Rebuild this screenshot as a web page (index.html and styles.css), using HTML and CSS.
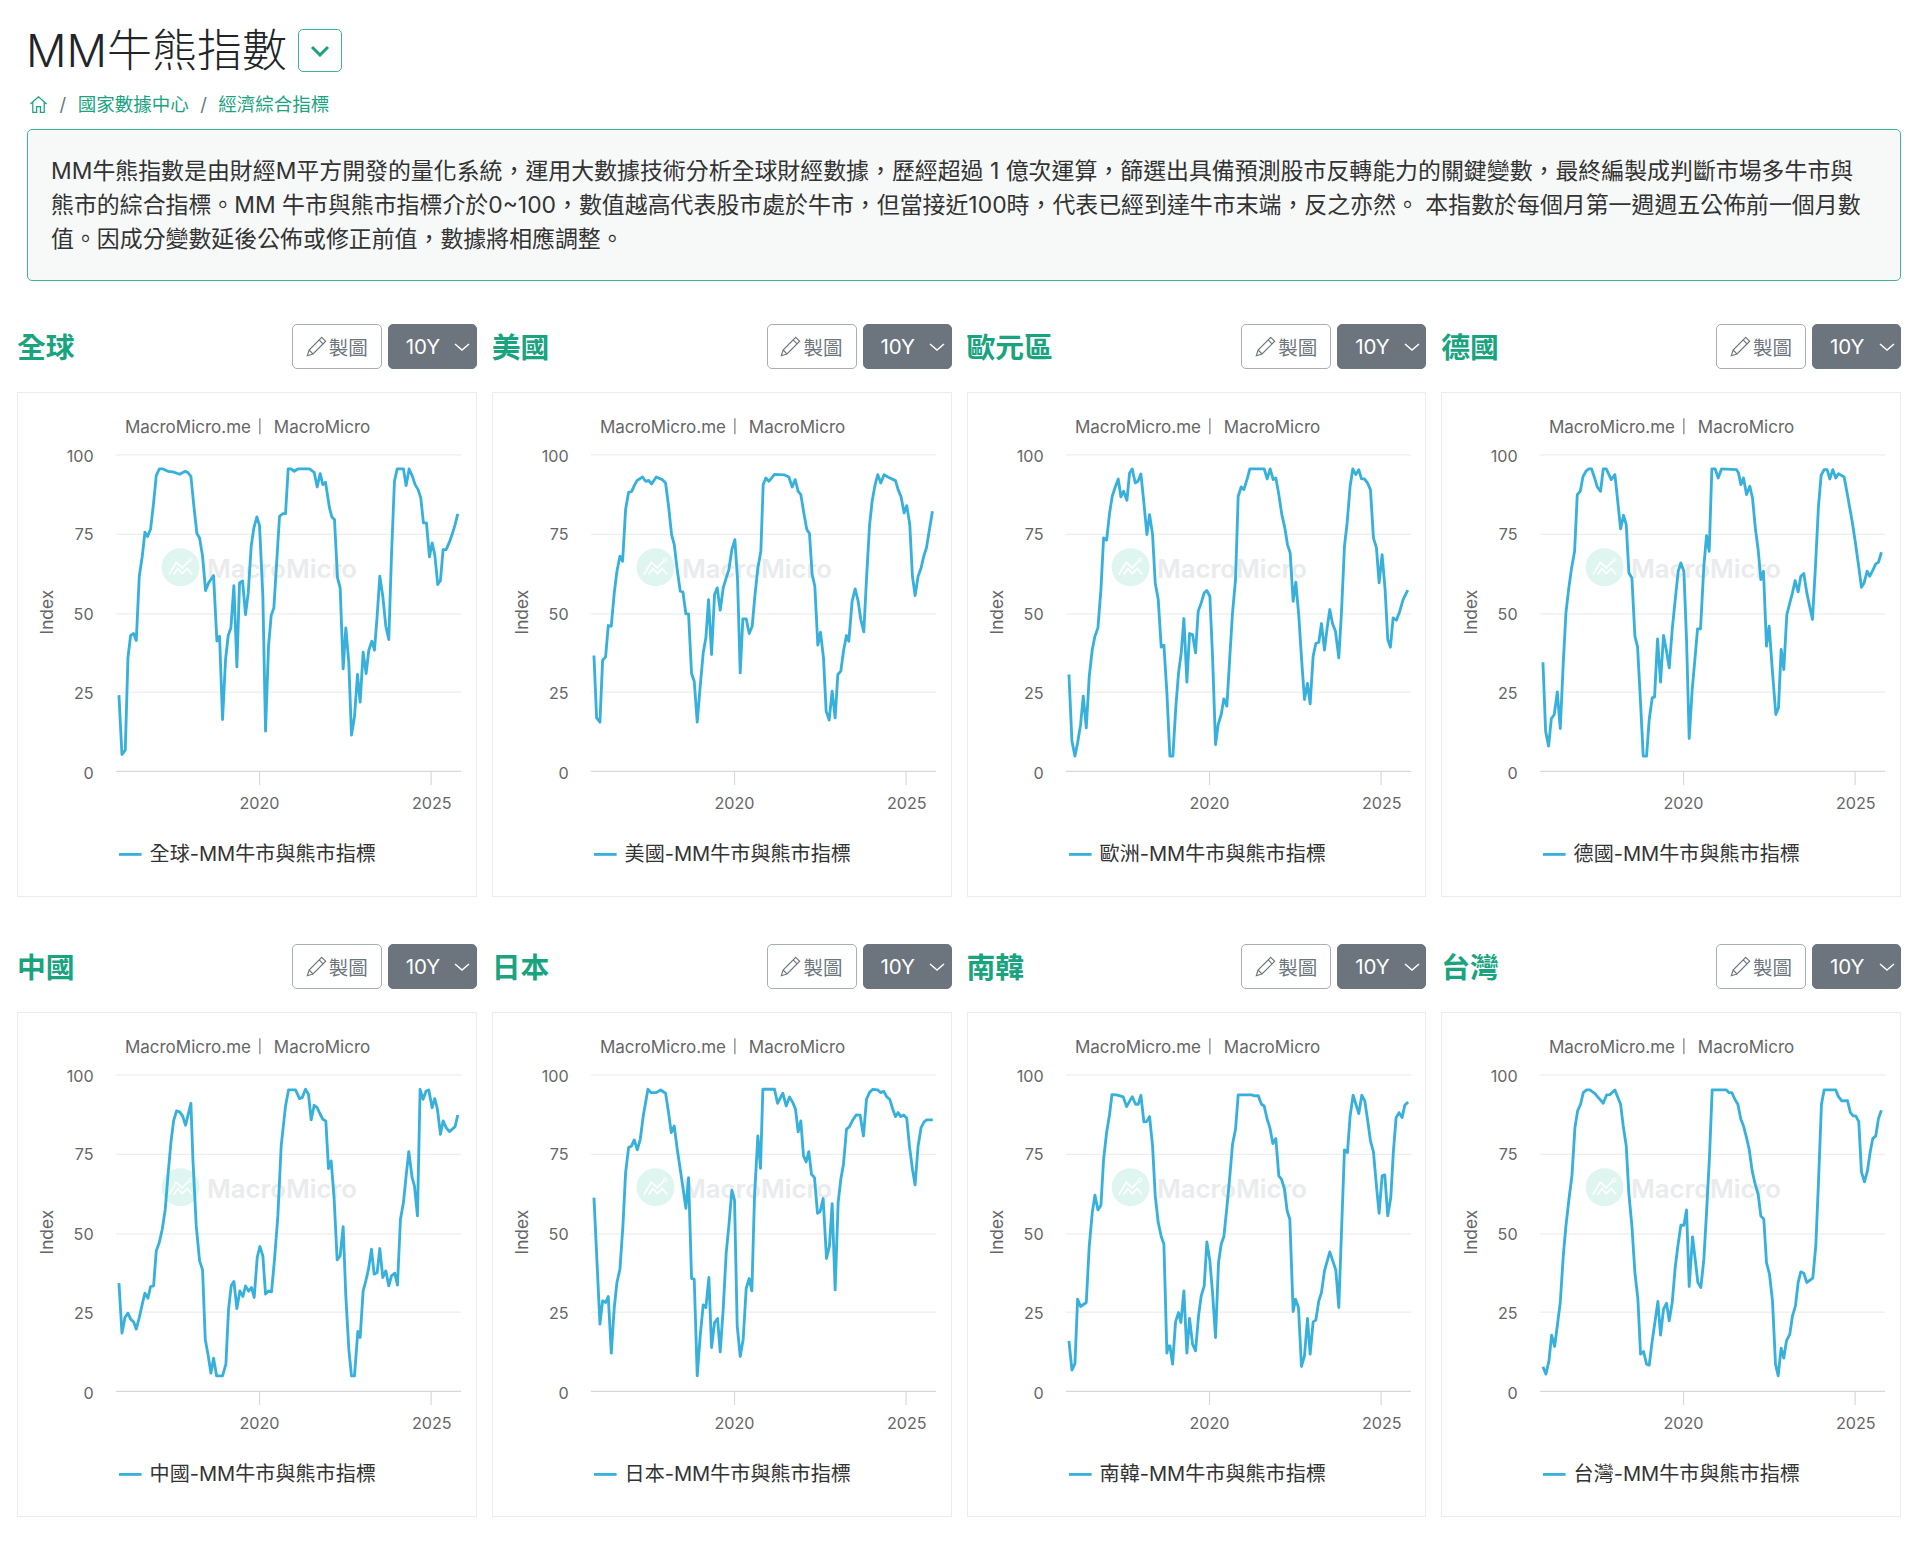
FILE: index.html
```html
<!DOCTYPE html>
<html lang="zh-TW">
<head>
<meta charset="utf-8">
<title>MM牛熊指數</title>
<link rel="stylesheet" href="styles.css">
</head>
<body>
<header class="top">
  <div class="title-row">
    <h1 class="title">MM牛熊指數</h1>
    <button class="title-toggle" type="button" aria-label="展開">
      <svg class="title-chevron" viewBox="0 0 20 12"><path d="M2 2l8 8 8-8"/></svg>
    </button>
  </div>
  <nav class="crumbs">
    <svg class="crumb-home" viewBox="0 0 20 20"><path d="M1.5 9.5L10 1.8l8.500 7.700M4 7.500V18.200h4V12.200h4v6h4V7.500"/></svg>
    <span class="crumb-sep">/</span>
    <a class="crumb">國家數據中心</a>
    <span class="crumb-sep">/</span>
    <a class="crumb">經濟綜合指標</a>
  </nav>
  <div class="intro">MM牛熊指數是由財經M平方開發的量化系統，運用大數據技術分析全球財經數據，歷經超過 1 億次運算，篩選出具備預測股市反轉能力的關鍵變數，最終編製成判斷市場多牛市與<br>熊市的綜合指標。MM 牛市與熊市指標介於0~100，數值越高代表股市處於牛市，但當接近100時，代表已經到達牛市末端，反之亦然。 本指數於每個月第一週週五公佈前一個月數<br>值。因成分變數延後公佈或修正前值，數據將相應調整。</div>
</header>
<main class="grid">

<section class="panel">
  <div class="panel-head"><h2 class="panel-title">全球</h2><div class="tools"><button class="btn-draw" type="button"><svg class="pencil" viewBox="0 0 24 24"><path d="M18 1.500l4.500 4.500L8 20.500 1.500 22.500 3.500 16zM15 4.500l4.500 4.500M3.500 16l4.500 4.500"/></svg>製圖</button><button class="btn-range" type="button">10Y<svg class="range-chevron" viewBox="0 0 16 8"><path d="M1 1l7 6 7-6"/></svg></button></div></div>
  <div class="card"><svg class="chart" viewBox="55 40 1374 1509">
    <circle class="wm-disc" cx="543" cy="563" r="57"/><path class="wm-mark" d="M508 585l22-37 18 17 19-20M522 585l13-18 13 15 15-15 15 18"/><circle class="wm-dot" cx="572" cy="541" r="5"/><text class="wm-text" x="622" y="596">MacroMicro</text>
    <path class="grid-line" d="M349 226H1385M349 464H1385M349 703H1385M349 938H1385"/><path class="axis-line" d="M349 1176H1385M780 1176V1217M1295 1176V1217"/>
    <text class="credit" x="376" y="159">MacroMicro.me</text><path class="credit-sep" d="M781 116V164"/><text class="credit" x="823" y="159">MacroMicro</text>
    <text class="tick end" x="282" y="248">100</text><text class="tick end" x="282" y="482">75</text><text class="tick end" x="282" y="721">50</text><text class="tick end" x="282" y="958">25</text><text class="tick end" x="282" y="1198">0</text>
    <text class="tick mid" x="780" y="1288">2020</text><text class="tick mid" x="1297" y="1288">2025</text>
    <text class="axis-name mid" transform="translate(159 698) rotate(-90)">Index</text>
    <polyline class="series" points="358,947 367,1125 377,1112 385,835 393,768 402,762 410,783 419,590 428,530 436,458 444,471 453,448 462,370 470,288 479,268 490,268 505,275 520,277 540,284 557,275 565,279 574,290 583,380 592,462 600,475 609,530 618,633 627,610 642,588 652,785 660,770 669,1020 678,840 686,768 694,745 703,618 712,862 720,610 729,604 738,705 746,640 755,500 763,445 772,412 780,438 790,650 798,1055 807,800 815,708 823,685 840,410 850,402 858,402 866,268 875,268 884,275 895,268 930,268 944,278 953,322 962,282 970,315 978,308 990,385 997,412 1005,420 1014,595 1022,625 1031,868 1039,745 1048,850 1056,1067 1065,1012 1074,885 1082,968 1091,818 1100,882 1108,812 1117,785 1125,812 1133,710 1141,590 1150,650 1159,740 1168,780 1176,530 1185,305 1193,268 1212,268 1220,318 1229,268 1238,288 1247,315 1256,330 1264,355 1272,430 1281,430 1290,532 1298,490 1306,525 1315,615 1323,603 1331,510 1340,510 1349,490 1358,465 1367,435 1375,403"/>
    <path class="series" d="M358 1425H426"/><text class="legend" x="450" y="1446">全球-MM牛市與熊市指標</text>
  </svg></div>
</section>

<section class="panel">
  <div class="panel-head"><h2 class="panel-title">美國</h2><div class="tools"><button class="btn-draw" type="button"><svg class="pencil" viewBox="0 0 24 24"><path d="M18 1.500l4.500 4.500L8 20.500 1.500 22.500 3.500 16zM15 4.500l4.500 4.500M3.500 16l4.500 4.500"/></svg>製圖</button><button class="btn-range" type="button">10Y<svg class="range-chevron" viewBox="0 0 16 8"><path d="M1 1l7 6 7-6"/></svg></button></div></div>
  <div class="card"><svg class="chart" viewBox="55 40 1374 1509">
    <circle class="wm-disc" cx="543" cy="563" r="57"/><path class="wm-mark" d="M508 585l22-37 18 17 19-20M522 585l13-18 13 15 15-15 15 18"/><circle class="wm-dot" cx="572" cy="541" r="5"/><text class="wm-text" x="622" y="596">MacroMicro</text>
    <path class="grid-line" d="M349 226H1385M349 464H1385M349 703H1385M349 938H1385"/><path class="axis-line" d="M349 1176H1385M780 1176V1217M1295 1176V1217"/>
    <text class="credit" x="376" y="159">MacroMicro.me</text><path class="credit-sep" d="M781 116V164"/><text class="credit" x="823" y="159">MacroMicro</text>
    <text class="tick end" x="282" y="248">100</text><text class="tick end" x="282" y="482">75</text><text class="tick end" x="282" y="721">50</text><text class="tick end" x="282" y="958">25</text><text class="tick end" x="282" y="1198">0</text>
    <text class="tick mid" x="780" y="1288">2020</text><text class="tick mid" x="1297" y="1288">2025</text>
    <text class="axis-name mid" transform="translate(159 698) rotate(-90)">Index</text>
    <polyline class="series" transform="translate(15 0)" points="343,828 351,1015 361,1028 369,842 378,832 386,738 395,740 404,640 412,575 421,530 429,545 438,390 447,338 456,336 464,318 472,303 489,292 498,305 507,302 516,313 530,292 548,300 558,310 567,380 576,465 584,495 593,570 602,635 610,637 619,703 627,703 636,882 644,905 653,1028 662,920 671,820 679,775 687,660 696,825 705,645 713,625 722,692 731,625 740,595 748,570 757,510 766,480 774,600 782,880 790,718 800,718 809,762 818,740 826,650 835,565 844,515 851,315 859,295 868,305 885,284 915,286 928,292 938,322 947,300 956,335 964,345 973,400 982,450 990,462 998,585 1006,620 1015,797 1023,758 1032,835 1040,995 1049,1022 1058,935 1067,1015 1075,885 1084,875 1092,815 1101,768 1108,785 1118,665 1127,628 1136,665 1144,720 1153,757 1161,600 1170,440 1178,365 1187,315 1195,285 1204,310 1214,285 1225,292 1248,303 1256,330 1265,352 1274,400 1282,378 1291,435 1299,590 1307,648 1316,590 1325,565 1333,530 1341,505 1350,450 1359,395"/>
    <path class="series" d="M358 1425H426"/><text class="legend" x="450" y="1446">美國-MM牛市與熊市指標</text>
  </svg></div>
</section>

<section class="panel">
  <div class="panel-head"><h2 class="panel-title">歐元區</h2><div class="tools"><button class="btn-draw" type="button"><svg class="pencil" viewBox="0 0 24 24"><path d="M18 1.500l4.500 4.500L8 20.500 1.500 22.500 3.500 16zM15 4.500l4.500 4.500M3.500 16l4.500 4.500"/></svg>製圖</button><button class="btn-range" type="button">10Y<svg class="range-chevron" viewBox="0 0 16 8"><path d="M1 1l7 6 7-6"/></svg></button></div></div>
  <div class="card"><svg class="chart" viewBox="55 40 1374 1509">
    <circle class="wm-disc" cx="543" cy="563" r="57"/><path class="wm-mark" d="M508 585l22-37 18 17 19-20M522 585l13-18 13 15 15-15 15 18"/><circle class="wm-dot" cx="572" cy="541" r="5"/><text class="wm-text" x="622" y="596">MacroMicro</text>
    <path class="grid-line" d="M349 226H1385M349 464H1385M349 703H1385M349 938H1385"/><path class="axis-line" d="M349 1176H1385M780 1176V1217M1295 1176V1217"/>
    <text class="credit" x="376" y="159">MacroMicro.me</text><path class="credit-sep" d="M781 116V164"/><text class="credit" x="823" y="159">MacroMicro</text>
    <text class="tick end" x="282" y="248">100</text><text class="tick end" x="282" y="482">75</text><text class="tick end" x="282" y="721">50</text><text class="tick end" x="282" y="958">25</text><text class="tick end" x="282" y="1198">0</text>
    <text class="tick mid" x="780" y="1288">2020</text><text class="tick mid" x="1297" y="1288">2025</text>
    <text class="axis-name mid" transform="translate(159 698) rotate(-90)">Index</text>
    <polyline class="series" transform="translate(31 0)" points="327,885 336,1085 345,1130 353,1090 362,1035 370,950 379,1045 388,890 397,810 405,770 414,745 423,630 431,475 440,482 449,400 457,350 466,322 475,298 483,352 491,335 501,362 509,280 517,268 526,310 534,305 543,283 552,370 561,465 569,405 578,465 586,610 595,660 604,803 612,797 621,940 630,1130 639,1130 648,980 656,880 664,820 672,717 681,908 689,762 698,765 707,820 715,695 724,670 733,640 741,633 750,650 758,830 767,1095 775,1035 784,1005 792,958 801,980 810,830 818,700 827,600 835,350 844,322 852,330 862,298 870,268 913,268 922,298 931,268 940,300 948,295 957,345 966,405 975,445 983,495 991,520 1000,665 1008,608 1017,710 1025,835 1034,960 1043,912 1051,973 1060,830 1068,792 1077,788 1085,732 1094,812 1102,745 1110,690 1118,732 1127,755 1137,835 1145,700 1154,500 1162,430 1171,320 1179,268 1188,285 1197,270 1205,298 1214,298 1223,310 1232,330 1241,475 1250,505 1258,610 1267,525 1276,630 1284,780 1292,803 1300,715 1310,722 1320,695 1330,660 1344,632"/>
    <path class="series" d="M358 1425H426"/><text class="legend" x="450" y="1446">歐洲-MM牛市與熊市指標</text>
  </svg></div>
</section>

<section class="panel">
  <div class="panel-head"><h2 class="panel-title">德國</h2><div class="tools"><button class="btn-draw" type="button"><svg class="pencil" viewBox="0 0 24 24"><path d="M18 1.500l4.500 4.500L8 20.500 1.500 22.500 3.500 16zM15 4.500l4.500 4.500M3.500 16l4.500 4.500"/></svg>製圖</button><button class="btn-range" type="button">10Y<svg class="range-chevron" viewBox="0 0 16 8"><path d="M1 1l7 6 7-6"/></svg></button></div></div>
  <div class="card"><svg class="chart" viewBox="55 40 1374 1509">
    <circle class="wm-disc" cx="543" cy="563" r="57"/><path class="wm-mark" d="M508 585l22-37 18 17 19-20M522 585l13-18 13 15 15-15 15 18"/><circle class="wm-dot" cx="572" cy="541" r="5"/><text class="wm-text" x="622" y="596">MacroMicro</text>
    <path class="grid-line" d="M349 226H1385M349 464H1385M349 703H1385M349 938H1385"/><path class="axis-line" d="M349 1176H1385M780 1176V1217M1295 1176V1217"/>
    <text class="credit" x="376" y="159">MacroMicro.me</text><path class="credit-sep" d="M781 116V164"/><text class="credit" x="823" y="159">MacroMicro</text>
    <text class="tick end" x="282" y="248">100</text><text class="tick end" x="282" y="482">75</text><text class="tick end" x="282" y="721">50</text><text class="tick end" x="282" y="958">25</text><text class="tick end" x="282" y="1198">0</text>
    <text class="tick mid" x="780" y="1288">2020</text><text class="tick mid" x="1297" y="1288">2025</text>
    <text class="axis-name mid" transform="translate(159 698) rotate(-90)">Index</text>
    <polyline class="series" transform="translate(19 0)" points="339,848 347,1055 356,1100 364,1018 373,1005 382,937 391,1047 400,850 408,700 416,630 425,565 434,515 442,345 451,335 459,292 468,275 476,268 485,268 494,295 502,322 512,335 520,268 529,268 544,300 555,285 563,360 572,448 581,407 589,435 597,580 606,595 615,770 623,802 632,970 640,1130 650,1130 658,1020 667,955 674,952 683,778 692,908 701,768 710,815 718,865 727,750 736,660 745,575 753,550 762,575 770,780 778,1077 787,930 796,830 803,748 812,748 822,560 830,468 838,515 846,268 856,268 865,295 875,268 920,270 926,280 933,315 941,295 950,345 960,320 968,355 977,450 985,510 993,600 1001,575 1010,800 1018,740 1027,865 1038,1005 1046,985 1054,810 1062,870 1071,705 1080,670 1088,640 1096,603 1105,637 1113,590 1122,582 1131,640 1148,720 1157,560 1166,380 1174,287 1183,270 1192,270 1200,298 1209,270 1218,295 1226,282 1243,292 1252,340 1260,385 1268,430 1277,490 1286,555 1295,623 1303,610 1312,575 1320,590 1330,570 1338,553 1346,548 1355,518"/>
    <path class="series" d="M358 1425H426"/><text class="legend" x="450" y="1446">德國-MM牛市與熊市指標</text>
  </svg></div>
</section>

<section class="panel">
  <div class="panel-head"><h2 class="panel-title">中國</h2><div class="tools"><button class="btn-draw" type="button"><svg class="pencil" viewBox="0 0 24 24"><path d="M18 1.500l4.500 4.500L8 20.500 1.500 22.500 3.500 16zM15 4.500l4.500 4.500M3.500 16l4.500 4.500"/></svg>製圖</button><button class="btn-range" type="button">10Y<svg class="range-chevron" viewBox="0 0 16 8"><path d="M1 1l7 6 7-6"/></svg></button></div></div>
  <div class="card"><svg class="chart" viewBox="55 40 1374 1509">
    <circle class="wm-disc" cx="543" cy="563" r="57"/><path class="wm-mark" d="M508 585l22-37 18 17 19-20M522 585l13-18 13 15 15-15 15 18"/><circle class="wm-dot" cx="572" cy="541" r="5"/><text class="wm-text" x="622" y="596">MacroMicro</text>
    <path class="grid-line" d="M349 226H1385M349 464H1385M349 703H1385M349 938H1385"/><path class="axis-line" d="M349 1176H1385M780 1176V1217M1295 1176V1217"/>
    <text class="credit" x="376" y="159">MacroMicro.me</text><path class="credit-sep" d="M781 116V164"/><text class="credit" x="823" y="159">MacroMicro</text>
    <text class="tick end" x="282" y="248">100</text><text class="tick end" x="282" y="482">75</text><text class="tick end" x="282" y="721">50</text><text class="tick end" x="282" y="958">25</text><text class="tick end" x="282" y="1198">0</text>
    <text class="tick mid" x="780" y="1288">2020</text><text class="tick mid" x="1297" y="1288">2025</text>
    <text class="axis-name mid" transform="translate(159 698) rotate(-90)">Index</text>
    <polyline class="series" transform="translate(0 -1)" points="358,852 367,1002 376,955 385,942 393,960 402,968 410,990 419,955 428,915 436,882 445,897 453,862 462,860 470,755 479,730 488,690 497,630 505,530 514,430 522,365 531,335 540,338 549,350 558,378 566,345 574,312 580,480 590,680 600,785 609,812 617,1020 626,1070 634,1122 642,1077 651,1130 669,1130 679,1095 687,930 695,860 703,847 712,928 721,875 730,892 738,860 747,876 756,865 764,895 773,775 781,742 790,770 798,885 807,875 816,878 825,780 835,650 845,440 858,320 867,272 888,272 900,298 908,295 918,270 927,285 935,362 944,318 953,325 962,345 970,360 979,365 987,508 995,485 1004,600 1013,782 1022,770 1031,682 1039,890 1048,1050 1056,1130 1065,1130 1075,997 1082,1015 1091,875 1099,845 1107,810 1116,750 1124,825 1133,820 1141,748 1150,835 1159,815 1168,860 1176,830 1186,822 1194,858 1203,660 1212,610 1220,530 1228,457 1238,535 1245,560 1254,650 1262,270 1271,300 1280,275 1288,272 1298,325 1306,298 1314,330 1323,405 1331,365 1340,385 1350,397 1367,382 1375,347"/>
    <path class="series" d="M358 1425H426"/><text class="legend" x="450" y="1446">中國-MM牛市與熊市指標</text>
  </svg></div>
</section>

<section class="panel">
  <div class="panel-head"><h2 class="panel-title">日本</h2><div class="tools"><button class="btn-draw" type="button"><svg class="pencil" viewBox="0 0 24 24"><path d="M18 1.500l4.500 4.500L8 20.500 1.500 22.500 3.500 16zM15 4.500l4.500 4.500M3.500 16l4.500 4.500"/></svg>製圖</button><button class="btn-range" type="button">10Y<svg class="range-chevron" viewBox="0 0 16 8"><path d="M1 1l7 6 7-6"/></svg></button></div></div>
  <div class="card"><svg class="chart" viewBox="55 40 1374 1509">
    <circle class="wm-disc" cx="543" cy="563" r="57"/><path class="wm-mark" d="M508 585l22-37 18 17 19-20M522 585l13-18 13 15 15-15 15 18"/><circle class="wm-dot" cx="572" cy="541" r="5"/><text class="wm-text" x="622" y="596">MacroMicro</text>
    <path class="grid-line" d="M349 226H1385M349 464H1385M349 703H1385M349 938H1385"/><path class="axis-line" d="M349 1176H1385M780 1176V1217M1295 1176V1217"/>
    <text class="credit" x="376" y="159">MacroMicro.me</text><path class="credit-sep" d="M781 116V164"/><text class="credit" x="823" y="159">MacroMicro</text>
    <text class="tick end" x="282" y="248">100</text><text class="tick end" x="282" y="482">75</text><text class="tick end" x="282" y="721">50</text><text class="tick end" x="282" y="958">25</text><text class="tick end" x="282" y="1198">0</text>
    <text class="tick mid" x="780" y="1288">2020</text><text class="tick mid" x="1297" y="1288">2025</text>
    <text class="axis-name mid" transform="translate(159 698) rotate(-90)">Index</text>
    <polyline class="series" transform="translate(15 -1)" points="343,595 361,975 369,905 378,910 386,892 395,1062 404,925 412,850 421,810 430,680 438,520 447,445 456,440 464,422 473,452 482,420 491,350 505,270 514,280 530,280 543,272 558,282 567,340 575,400 584,380 593,450 602,510 610,565 619,627 627,535 636,838 644,840 653,1130 662,1010 671,917 679,925 688,835 696,1045 705,970 714,958 722,1058 731,930 740,760 748,680 757,573 765,603 773,980 782,1072 791,1020 800,868 809,838 817,875 825,590 835,410 843,507 850,270 885,270 894,312 910,282 920,320 930,293 940,310 948,330 956,398 964,365 972,470 980,488 988,457 996,525 1005,535 1014,642 1022,637 1031,598 1041,778 1050,740 1058,613 1067,872 1076,610 1084,540 1092,495 1101,390 1110,382 1120,362 1130,347 1142,348 1152,410 1161,300 1170,280 1180,270 1195,272 1204,280 1213,276 1222,293 1231,300 1240,330 1248,352 1256,340 1264,352 1273,347 1282,357 1290,440 1299,510 1307,557 1316,440 1325,385 1334,368 1342,362 1360,362"/>
    <path class="series" d="M358 1425H426"/><text class="legend" x="450" y="1446">日本-MM牛市與熊市指標</text>
  </svg></div>
</section>

<section class="panel">
  <div class="panel-head"><h2 class="panel-title">南韓</h2><div class="tools"><button class="btn-draw" type="button"><svg class="pencil" viewBox="0 0 24 24"><path d="M18 1.500l4.500 4.500L8 20.500 1.500 22.500 3.500 16zM15 4.500l4.500 4.500M3.500 16l4.500 4.500"/></svg>製圖</button><button class="btn-range" type="button">10Y<svg class="range-chevron" viewBox="0 0 16 8"><path d="M1 1l7 6 7-6"/></svg></button></div></div>
  <div class="card"><svg class="chart" viewBox="55 40 1374 1509">
    <circle class="wm-disc" cx="543" cy="563" r="57"/><path class="wm-mark" d="M508 585l22-37 18 17 19-20M522 585l13-18 13 15 15-15 15 18"/><circle class="wm-dot" cx="572" cy="541" r="5"/><text class="wm-text" x="622" y="596">MacroMicro</text>
    <path class="grid-line" d="M349 226H1385M349 464H1385M349 703H1385M349 938H1385"/><path class="axis-line" d="M349 1176H1385M780 1176V1217M1295 1176V1217"/>
    <text class="credit" x="376" y="159">MacroMicro.me</text><path class="credit-sep" d="M781 116V164"/><text class="credit" x="823" y="159">MacroMicro</text>
    <text class="tick end" x="282" y="248">100</text><text class="tick end" x="282" y="482">75</text><text class="tick end" x="282" y="721">50</text><text class="tick end" x="282" y="958">25</text><text class="tick end" x="282" y="1198">0</text>
    <text class="tick mid" x="780" y="1288">2020</text><text class="tick mid" x="1297" y="1288">2025</text>
    <text class="axis-name mid" transform="translate(159 698) rotate(-90)">Index</text>
    <polyline class="series" transform="translate(31 -1)" points="327,1025 336,1113 345,1093 353,900 362,922 379,910 388,740 397,640 405,588 414,632 423,618 431,480 440,400 449,345 456,286 470,287 490,293 500,322 517,292 527,315 535,315 543,288 552,368 560,367 569,352 578,440 586,590 595,670 604,712 612,735 621,1062 625,1040 630,1040 638,1095 647,968 656,940 663,970 672,875 681,1062 689,958 698,1035 707,1055 716,950 724,890 733,860 741,728 750,785 758,880 767,1015 776,790 784,735 792,712 801,625 810,530 818,435 827,390 835,287 875,287 885,290 895,289 905,315 913,320 922,360 930,385 939,433 948,418 957,530 965,540 974,570 982,635 990,660 1000,937 1007,900 1016,925 1025,1102 1034,1070 1043,958 1051,1065 1060,968 1068,963 1077,905 1085,880 1094,815 1110,758 1128,812 1137,925 1145,700 1154,452 1163,460 1171,350 1180,288 1197,343 1206,288 1215,305 1224,365 1232,425 1241,458 1250,560 1258,642 1267,530 1275,527 1284,650 1293,595 1301,455 1309,355 1318,340 1327,355 1335,318 1345,308"/>
    <path class="series" d="M358 1425H426"/><text class="legend" x="450" y="1446">南韓-MM牛市與熊市指標</text>
  </svg></div>
</section>

<section class="panel">
  <div class="panel-head"><h2 class="panel-title">台灣</h2><div class="tools"><button class="btn-draw" type="button"><svg class="pencil" viewBox="0 0 24 24"><path d="M18 1.500l4.500 4.500L8 20.500 1.500 22.500 3.500 16zM15 4.500l4.500 4.500M3.500 16l4.500 4.500"/></svg>製圖</button><button class="btn-range" type="button">10Y<svg class="range-chevron" viewBox="0 0 16 8"><path d="M1 1l7 6 7-6"/></svg></button></div></div>
  <div class="card"><svg class="chart" viewBox="55 40 1374 1509">
    <circle class="wm-disc" cx="543" cy="563" r="57"/><path class="wm-mark" d="M508 585l22-37 18 17 19-20M522 585l13-18 13 15 15-15 15 18"/><circle class="wm-dot" cx="572" cy="541" r="5"/><text class="wm-text" x="622" y="596">MacroMicro</text>
    <path class="grid-line" d="M349 226H1385M349 464H1385M349 703H1385M349 938H1385"/><path class="axis-line" d="M349 1176H1385M780 1176V1217M1295 1176V1217"/>
    <text class="credit" x="376" y="159">MacroMicro.me</text><path class="credit-sep" d="M781 116V164"/><text class="credit" x="823" y="159">MacroMicro</text>
    <text class="tick end" x="282" y="248">100</text><text class="tick end" x="282" y="482">75</text><text class="tick end" x="282" y="721">50</text><text class="tick end" x="282" y="958">25</text><text class="tick end" x="282" y="1198">0</text>
    <text class="tick mid" x="780" y="1288">2020</text><text class="tick mid" x="1297" y="1288">2025</text>
    <text class="axis-name mid" transform="translate(159 698) rotate(-90)">Index</text>
    <polyline class="series" transform="translate(19 -1)" points="339,1103 348,1125 357,1085 365,1008 374,1042 382,980 391,910 400,770 408,680 417,600 426,530 435,385 443,335 452,315 460,280 470,272 480,272 494,282 508,298 520,312 530,287 540,286 555,272 572,315 580,380 589,440 597,585 606,680 615,820 624,900 632,1065 641,1057 650,1095 658,1098 667,1025 675,970 684,907 692,1008 701,930 710,912 718,965 727,910 736,805 744,740 753,678 762,678 770,632 778,862 788,713 796,780 804,850 813,865 822,780 830,640 839,470 847,272 890,272 897,280 906,280 915,300 924,315 933,360 941,380 950,415 958,450 967,515 976,555 985,585 993,650 1002,660 1010,790 1019,825 1028,905 1037,1095 1045,1130 1054,1047 1062,1077 1070,1025 1080,1005 1088,950 1097,920 1105,850 1113,818 1122,822 1131,850 1149,837 1158,740 1166,550 1175,315 1183,272 1218,272 1226,292 1236,305 1253,304 1262,340 1270,350 1278,350 1287,367 1295,518 1304,548 1313,515 1321,460 1329,418 1338,410 1346,358 1355,333"/>
    <path class="series" d="M358 1425H426"/><text class="legend" x="450" y="1446">台灣-MM牛市與熊市指標</text>
  </svg></div>
</section>

</main>
</body>
</html>
```
FILE: styles.css
```css
* { box-sizing: border-box; }
html, body { margin: 0; padding: 0; background: #fff; }
body {
  font-family: Inter, "Noto Sans CJK TC", sans-serif;
  color: #333;
  height: 1544px;
  overflow: hidden;
}
.top { padding: 29px 19px 0 27px; }
.title-row { display: flex; align-items: center; gap: 11px; height: 43px; margin-left: -1px; }
.title { margin: 0; font-size: 45px; font-weight: 300; line-height: 43px; color: #212529; }
.title-toggle {
  width: 44px; height: 43px; padding: 0;
  display: flex; align-items: center; justify-content: center;
  background: #fff; border: 1px solid #3cb49a; border-radius: 5px;
}
.title-chevron { width: 20px; height: 12px; fill: none; stroke: #1aa37f; stroke-width: 3; }
.crumbs { display: flex; align-items: center; gap: 11.500px; height: 24px; margin: 20px 0 13px 2px; font-size: 18.500px; line-height: 24px; }
.crumb { color: #1aa37f; }
.crumb-sep { color: #6c757d; }
.crumb-home { width: 19px; height: 19px; fill: none; stroke: #1aa37f; stroke-width: 1.3; }
.intro {
  padding: 24px 23px;
  background: #f6f9f8;
  border: 1px solid #3fb39a;
  border-radius: 5px;
  font-size: 22.920px;
  line-height: 34px;
  color: #333;
  white-space: nowrap;
}
.grid {
  display: grid;
  grid-template-columns: repeat(4, 1fr);
  column-gap: 15px;
  row-gap: 47.500px;
  padding: 43px 19px 0 17px;
}
.panel-head { display: flex; align-items: center; justify-content: space-between; height: 45px; margin-bottom: 23px; }
.panel-title { margin: 2px 0 0; font-size: 28.800px; font-weight: 700; color: #1aa37f; line-height: 43px; }
.tools { display: flex; gap: 6px; }
.btn-draw, .btn-range {
  display: flex; align-items: center; height: 45px; padding: 0;
  font-family: inherit; font-size: 19.500px; border-radius: 5px;
}
.btn-draw {
  width: 90px; justify-content: center; gap: 2px;
  background: #fff; color: #6c757d; border: 1px solid #a9aeb2;
}
.pencil { width: 21px; height: 21px; fill: none; stroke: #6c757d; stroke-width: 1.300; }
.btn-range {
  width: 89px; padding-left: 17px; gap: 14px;
  background: #6c757d; color: #fff; border: 1px solid #6c757d; font-size: 20.500px;
}
.range-chevron { width: 16px; height: 8px; fill: none; stroke: #fff; stroke-width: 1.500; }
.card { background: #fff; border: 1px solid #ececec; }
.chart { display: block; width: 100%; height: auto; }
.tick { font-family: Inter, sans-serif; font-size: 48.500px; fill: #666; }
.credit { font-family: Inter, sans-serif; font-size: 51px; fill: #666; }
.credit-sep { fill: none; stroke: #888; stroke-width: 4; }
.axis-name { font-family: Inter, sans-serif; font-size: 52px; fill: #666; }
.end { text-anchor: end; }
.mid { text-anchor: middle; }
.grid-line { fill: none; stroke: #e9e9e9; stroke-width: 3; }
.axis-line { fill: none; stroke: #d8d8d8; stroke-width: 3.500; }
.series { fill: none; stroke: #38b0dc; stroke-width: 8.500; stroke-linejoin: round; }
.legend { font-family: Inter, "Noto Sans CJK TC", sans-serif; font-size: 60.300px; font-weight: 400; fill: #333; }
.wm-disc { fill: #dff5ef; }
.wm-mark { fill: none; stroke: #fff; stroke-width: 5; }
.wm-dot { fill: none; stroke: #fff; stroke-width: 3; }
.wm-text { font-family: Inter, sans-serif; font-size: 77.500px; font-weight: 600; fill: #e9ebed; }
```
